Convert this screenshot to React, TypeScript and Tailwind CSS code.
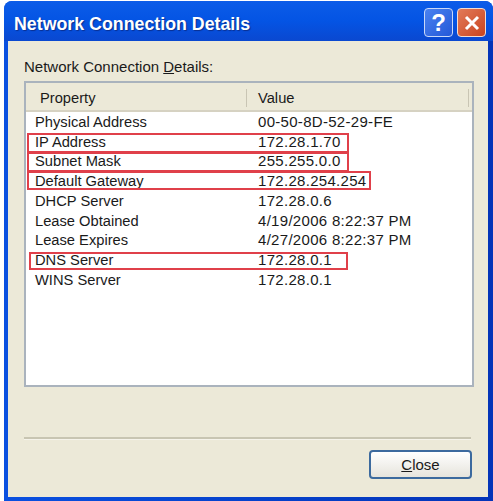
const rows = [
  ["Physical Address", "00-50-8D-52-29-FE"],
  ["IP Address", "172.28.1.70"],
  ["Subnet Mask", "255.255.0.0"],
  ["Default Gateway", "172.28.254.254"],
  ["DHCP Server", "172.28.0.6"],
  ["Lease Obtained", "4/19/2006 8:22:37 PM"],
  ["Lease Expires", "4/27/2006 8:22:37 PM"],
  ["DNS Server", "172.28.0.1"],
  ["WINS Server", "172.28.0.1"],
];

const boxes = [
  "left-[27px] top-[133px] w-[322px] h-[20px]",
  "left-[27px] top-[152px] w-[322px] h-[20px]",
  "left-[27px] top-[171px] w-[344px] h-[19px]",
  "left-[29px] top-[252px] w-[319px] h-[18px]",
];

export default function App() {
  return (
    <div className="relative w-[493px] h-[501px] bg-white pl-[4px] pt-[1px] text-[15px] leading-[20px] text-[#1a1a1a] font-['Liberation_Sans',sans-serif] overflow-hidden">
      <div className="w-[489px] h-[500px] rounded-t-[8px] flex flex-col bg-gradient-to-r from-[#0a50e0] to-[#0434b8]">
        <div className="h-[40px] shrink-0 flex pl-[10px] pr-[7px] pt-[7px] rounded-t-[8px] bg-gradient-to-b from-[#0c5ce8] via-[#0454e4] to-[#0a48d0]">
          <span className="flex-1 text-white font-bold text-[17.8px] leading-[32px] [text-shadow:1px_1px_1px_#0a2f90]">Network Connection Details</span>
          <div className="flex gap-[4px]">
            <div className="w-[29px] h-[29px] rounded-[4px] border border-[#c9d8f8] flex items-center justify-center bg-gradient-to-br from-[#4a82f0] to-[#2458d8]">
              <span className="text-white font-bold text-[24px] leading-none">?</span>
            </div>
            <div className="w-[29px] h-[29px] rounded-[4px] border border-[#f2dcd2] flex items-center justify-center bg-gradient-to-br from-[#e27a58] to-[#c9431c]">
              <svg width="18" height="18" viewBox="0 0 18 18" fill="none" stroke="white" strokeWidth="3">
                <path d="M3 3 L15 15 M15 3 L3 15" />
              </svg>
            </div>
          </div>
        </div>
        <div className="flex-1 ml-[4px] mr-[5px] mb-[4px] bg-[#ece9d8] flex flex-col pl-[16px] pr-[14px] pt-[15px]">
          <div className="h-[22px] flex items-center">
            <span>Network Connection <u>D</u>etails:</span>
          </div>
          <div className="mt-[3px] h-[306px] border-2 border-[#aab3bd] bg-white flex flex-col">
            <div className="h-[29px] shrink-0 flex items-center pt-[2px] bg-[#ece9d8] border-b-[2px] border-[#d6d2c2] text-[14.7px]">
              <div className="w-[220px] pl-[14px]">Property</div>
              <div className="w-[1px] h-[18px] bg-[#c9c5b4]" />
              <div className="flex-1 pl-[11px]">Value</div>
              <div className="w-[1px] h-[18px] mr-[3px] bg-[#c9c5b4]" />
            </div>
            <div>
              {rows.map(([a, b]) => (
                <div key={a} className="flex h-[19.75px] items-center">
                  <div className="w-[221px] pl-[9px] text-[14.7px]">{a}</div>
                  <div className="pl-[11px] tracking-[0.3px]">{b}</div>
                </div>
              ))}
            </div>
          </div>
          <div className="mt-[50px] mr-[3px] h-[3px] bg-[#c8c5b2] border-b border-[#f5f3ea]" />
          <div className="flex justify-end mt-[10px] mr-[2px]">
            <div className="w-[103px] h-[29px] rounded-[4px] border-2 border-[#3c6a9e] bg-gradient-to-b from-white to-[#e6e4dc] flex items-center justify-center">
              <span><u>C</u>lose</span>
            </div>
          </div>
        </div>
      </div>
      {boxes.map((c) => (
        <div key={c} className={"absolute border-2 border-[#e0404a] " + c} />
      ))}
    </div>
  );
}
